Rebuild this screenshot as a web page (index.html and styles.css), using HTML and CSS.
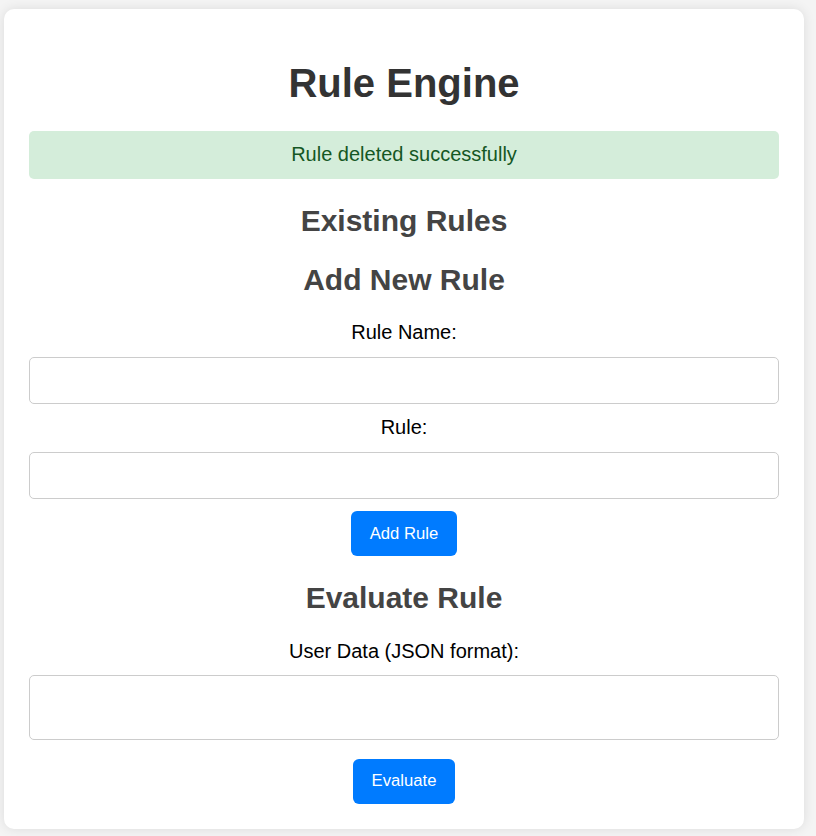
FILE: index.html
```html
<!DOCTYPE html>
<html lang="en">
<head>
<meta charset="utf-8">
<title>Rule Engine</title>
<link rel="stylesheet" href="styles.css">
</head>
<body>
<div class="container">
  <h1 class="title">Rule Engine</h1>
  <div class="alert">Rule deleted successfully</div>
  <h2 class="section-title">Existing Rules</h2>
  <div class="rules-list"></div>
  <h2 class="section-title">Add New Rule</h2>
  <form class="form">
    <label class="label" for="ruleName">Rule Name:</label>
    <input class="field" id="ruleName" type="text">
    <label class="label" for="ruleText">Rule:</label>
    <input class="field" id="ruleText" type="text">
    <div class="actions"><button class="btn" type="button">Add Rule</button></div>
  </form>
  <h2 class="section-title">Evaluate Rule</h2>
  <form class="form">
    <label class="label" for="userData">User Data (JSON format):</label>
    <textarea class="field area" id="userData"></textarea>
    <div class="actions"><button class="btn" type="button">Evaluate</button></div>
  </form>
</div>
</body>
</html>
```
FILE: styles.css
```css
html, body {
  margin: 0;
  padding: 0;
}
body {
  background: #f4f4f4;
  font-family: "Liberation Sans", Arial, sans-serif;
  padding: 9px 0 7px 4px;
}
.container {
  width: 800px;
  box-sizing: border-box;
  background: #ffffff;
  border-radius: 10px;
  box-shadow: 0 0 12px rgba(0, 0, 0, 0.1);
  padding: 25px;
  text-align: center;
}
.title {
  font-size: 40px;
  font-weight: bold;
  color: #333333;
  margin: 26.8px 0 25.2px;
}
.alert {
  background: #d4edda;
  color: #155724;
  font-size: 20px;
  line-height: 23px;
  padding: 12.5px;
  border-radius: 5px;
}
.section-title {
  font-size: 30px;
  font-weight: bold;
  color: #444444;
  margin: 24.8px 0;
}
.form {
  margin: 0;
}
.label {
  display: block;
  font-size: 20px;
  line-height: 23px;
  color: #000000;
  margin-bottom: 12.5px;
}
.field {
  display: block;
  width: 100%;
  height: 47px;
  box-sizing: border-box;
  border: 1px solid #cccccc;
  border-radius: 5px;
  padding: 12.5px;
  font-family: "Liberation Sans", Arial, sans-serif;
  font-size: 16.67px;
  margin: 0 0 12.5px;
  background: #ffffff;
}
.area {
  height: 65px;
  resize: none;
  margin-bottom: 18.5px;
}
.actions {
  display: flex;
  justify-content: center;
}
.btn {
  background: #007bff;
  color: #ffffff;
  border: none;
  border-radius: 6px;
  font-family: "Liberation Sans", Arial, sans-serif;
  font-size: 16.67px;
  line-height: 20px;
  padding: 12.5px 18.75px;
  cursor: pointer;
}
```
